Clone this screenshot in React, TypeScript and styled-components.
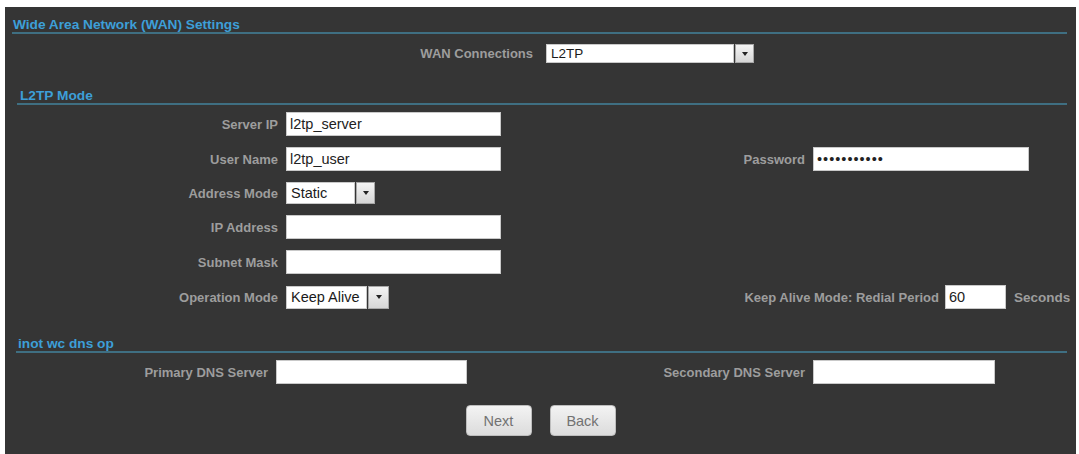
import React from "react";
import styled, { createGlobalStyle } from "styled-components";

const GlobalStyle = createGlobalStyle`
  html, body {
    margin: 0;
    padding: 0;
    background: #fff;
  }
  body {
    font-family: "Liberation Sans", Arial, sans-serif;
  }
`;

const Panel = styled.div`
  margin: 7px 3px 0 5px;
  height: 447px;
  background: #353535;
  overflow: hidden;
  display: flex;
  flex-direction: column;
`;

const SectionTitle = styled.div<{ $indent: number; $pad: number; $top: number }>`
  margin: ${p => p.$top}px 9px 0 ${p => p.$indent}px;
  padding-left: ${p => p.$pad}px;
  height: 14px;
  line-height: 14px;
  font-size: 13.7px;
  font-weight: bold;
  color: #3d9fd8;
  border-bottom: 2px solid #3f6f82;
  white-space: nowrap;
`;

const WanRow = styled.div`
  display: grid;
  grid-template-columns: 528px 208px;
  column-gap: 13px;
  align-items: center;
  margin-top: 10px;
`;

const FieldGrid = styled.div<{ $cols: string; $top: number }>`
  display: grid;
  grid-template-columns: ${p => p.$cols};
  column-gap: 8px;
  row-gap: 11px;
  align-items: center;
  margin-top: ${p => p.$top}px;
`;

const Label = styled.label`
  text-align: right;
  font-size: 13px;
  font-weight: bold;
  color: #9d9d9d;
  white-space: nowrap;
`;

const TextInput = styled.input<{ $w?: number; $secret?: boolean }>`
  box-sizing: border-box;
  width: ${p => (p.$w ? `${p.$w}px` : "100%")};
  height: 24px;
  margin: 0;
  padding: 0 3px;
  border: 1px solid #c9c9c9;
  background: #fff;
  font-family: "Liberation Sans", Arial, sans-serif;
  font-size: 14.5px;
  letter-spacing: ${p => (p.$secret ? "1px" : "normal")};
  color: #222;
  outline: none;
`;

const SelectBox = styled.div<{ $w: number; $h: number; $fs: number }>`
  display: flex;
  width: ${p => p.$w}px;
  height: ${p => p.$h}px;
  font-size: ${p => p.$fs}px;
`;

const SelectValue = styled.div`
  flex: 1;
  background: #fff;
  border: 1px solid #c9c9c9;
  padding-left: 4px;
  display: flex;
  align-items: center;
  color: #1a1a1a;
  white-space: nowrap;
  overflow: hidden;
`;

const SelectButton = styled.div<{ $bw: number }>`
  box-sizing: border-box;
  width: ${p => p.$bw}px;
  margin-left: 1px;
  background: linear-gradient(#f4f4f4, #d6d6d6);
  border: 1px solid #a8a8a8;
  display: flex;
  align-items: center;
  justify-content: center;
`;

const Caret = styled.span`
  width: 0;
  height: 0;
  border-left: 3px solid transparent;
  border-right: 3px solid transparent;
  border-top: 4px solid #222;
`;

const RedialGroup = styled.div`
  grid-column: 3 / 5;
  display: flex;
  align-items: center;
  white-space: nowrap;
`;

const RedialLabel = styled(Label)`
  width: 430px;
  flex: none;
`;

const Unit = styled.span`
  margin-left: 8px;
  font-size: 13.5px;
  font-weight: bold;
  color: #9d9d9d;
`;

const ButtonRow = styled.div`
  display: flex;
  justify-content: center;
  gap: 18px;
  margin-top: 21px;
`;

const ActionButton = styled.button`
  width: 66px;
  height: 31px;
  border: 1px solid #bdbdbd;
  border-radius: 4px;
  background: linear-gradient(#f3f3f3, #dcdcdc);
  color: #727272;
  font-family: "Liberation Sans", Arial, sans-serif;
  font-size: 14.5px;
  padding: 0;
`;

type FakeSelectProps = {
  value: string;
  width: number;
  height: number;
  buttonWidth: number;
  fontSize?: number;
};

const FakeSelect: React.FC<FakeSelectProps> = ({ value, width, height, buttonWidth, fontSize = 14.5 }) => (
  <SelectBox $w={width} $h={height} $fs={fontSize}>
    <SelectValue>{value}</SelectValue>
    <SelectButton $bw={buttonWidth}>
      <Caret />
    </SelectButton>
  </SelectBox>
);

const L2TP_COLS = "273px 215px 296px 216px";
const DNS_COLS = "263px 191px 330px 182px";

export default function App() {
  return (
    <>
      <GlobalStyle />
      <Panel>
        <SectionTitle $indent={7} $pad={1} $top={11}>
          Wide Area Network (WAN) Settings
        </SectionTitle>
        <WanRow>
          <Label>WAN Connections</Label>
          <FakeSelect value="L2TP" width={208} height={19} buttonWidth={19} fontSize={13.5} />
        </WanRow>

        <SectionTitle $indent={12} $pad={3} $top={26}>
          L2TP Mode
        </SectionTitle>
        <FieldGrid $cols={L2TP_COLS} $top={7}>
          <Label>Server IP</Label>
          <TextInput defaultValue="l2tp_server" />
          <div />
          <div />

          <Label>User Name</Label>
          <TextInput defaultValue="l2tp_user" />
          <Label>Password</Label>
          <TextInput type="password" $secret defaultValue="l2tppasswd1" />

          <Label>Address Mode</Label>
          <FakeSelect value="Static" width={89} height={22} buttonWidth={19} />
          <div />
          <div />

          <Label>IP Address</Label>
          <TextInput />
          <div />
          <div />

          <Label>Subnet Mask</Label>
          <TextInput />
          <div />
          <div />

          <Label>Operation Mode</Label>
          <FakeSelect value="Keep Alive" width={103} height={23} buttonWidth={21} />
          <RedialGroup>
            <RedialLabel>Keep Alive Mode: Redial Period</RedialLabel>
            <TextInput $w={61} defaultValue="60" style={{ marginLeft: 6 }} />
            <Unit>Seconds</Unit>
          </RedialGroup>
        </FieldGrid>

        <SectionTitle $indent={11} $pad={2} $top={28}>
          inot wc dns op
        </SectionTitle>
        <FieldGrid $cols={DNS_COLS} $top={7}>
          <Label>Primary DNS Server</Label>
          <TextInput />
          <Label>Secondary DNS Server</Label>
          <TextInput />
        </FieldGrid>

        <ButtonRow>
          <ActionButton>Next</ActionButton>
          <ActionButton>Back</ActionButton>
        </ButtonRow>
      </Panel>
    </>
  );
}
